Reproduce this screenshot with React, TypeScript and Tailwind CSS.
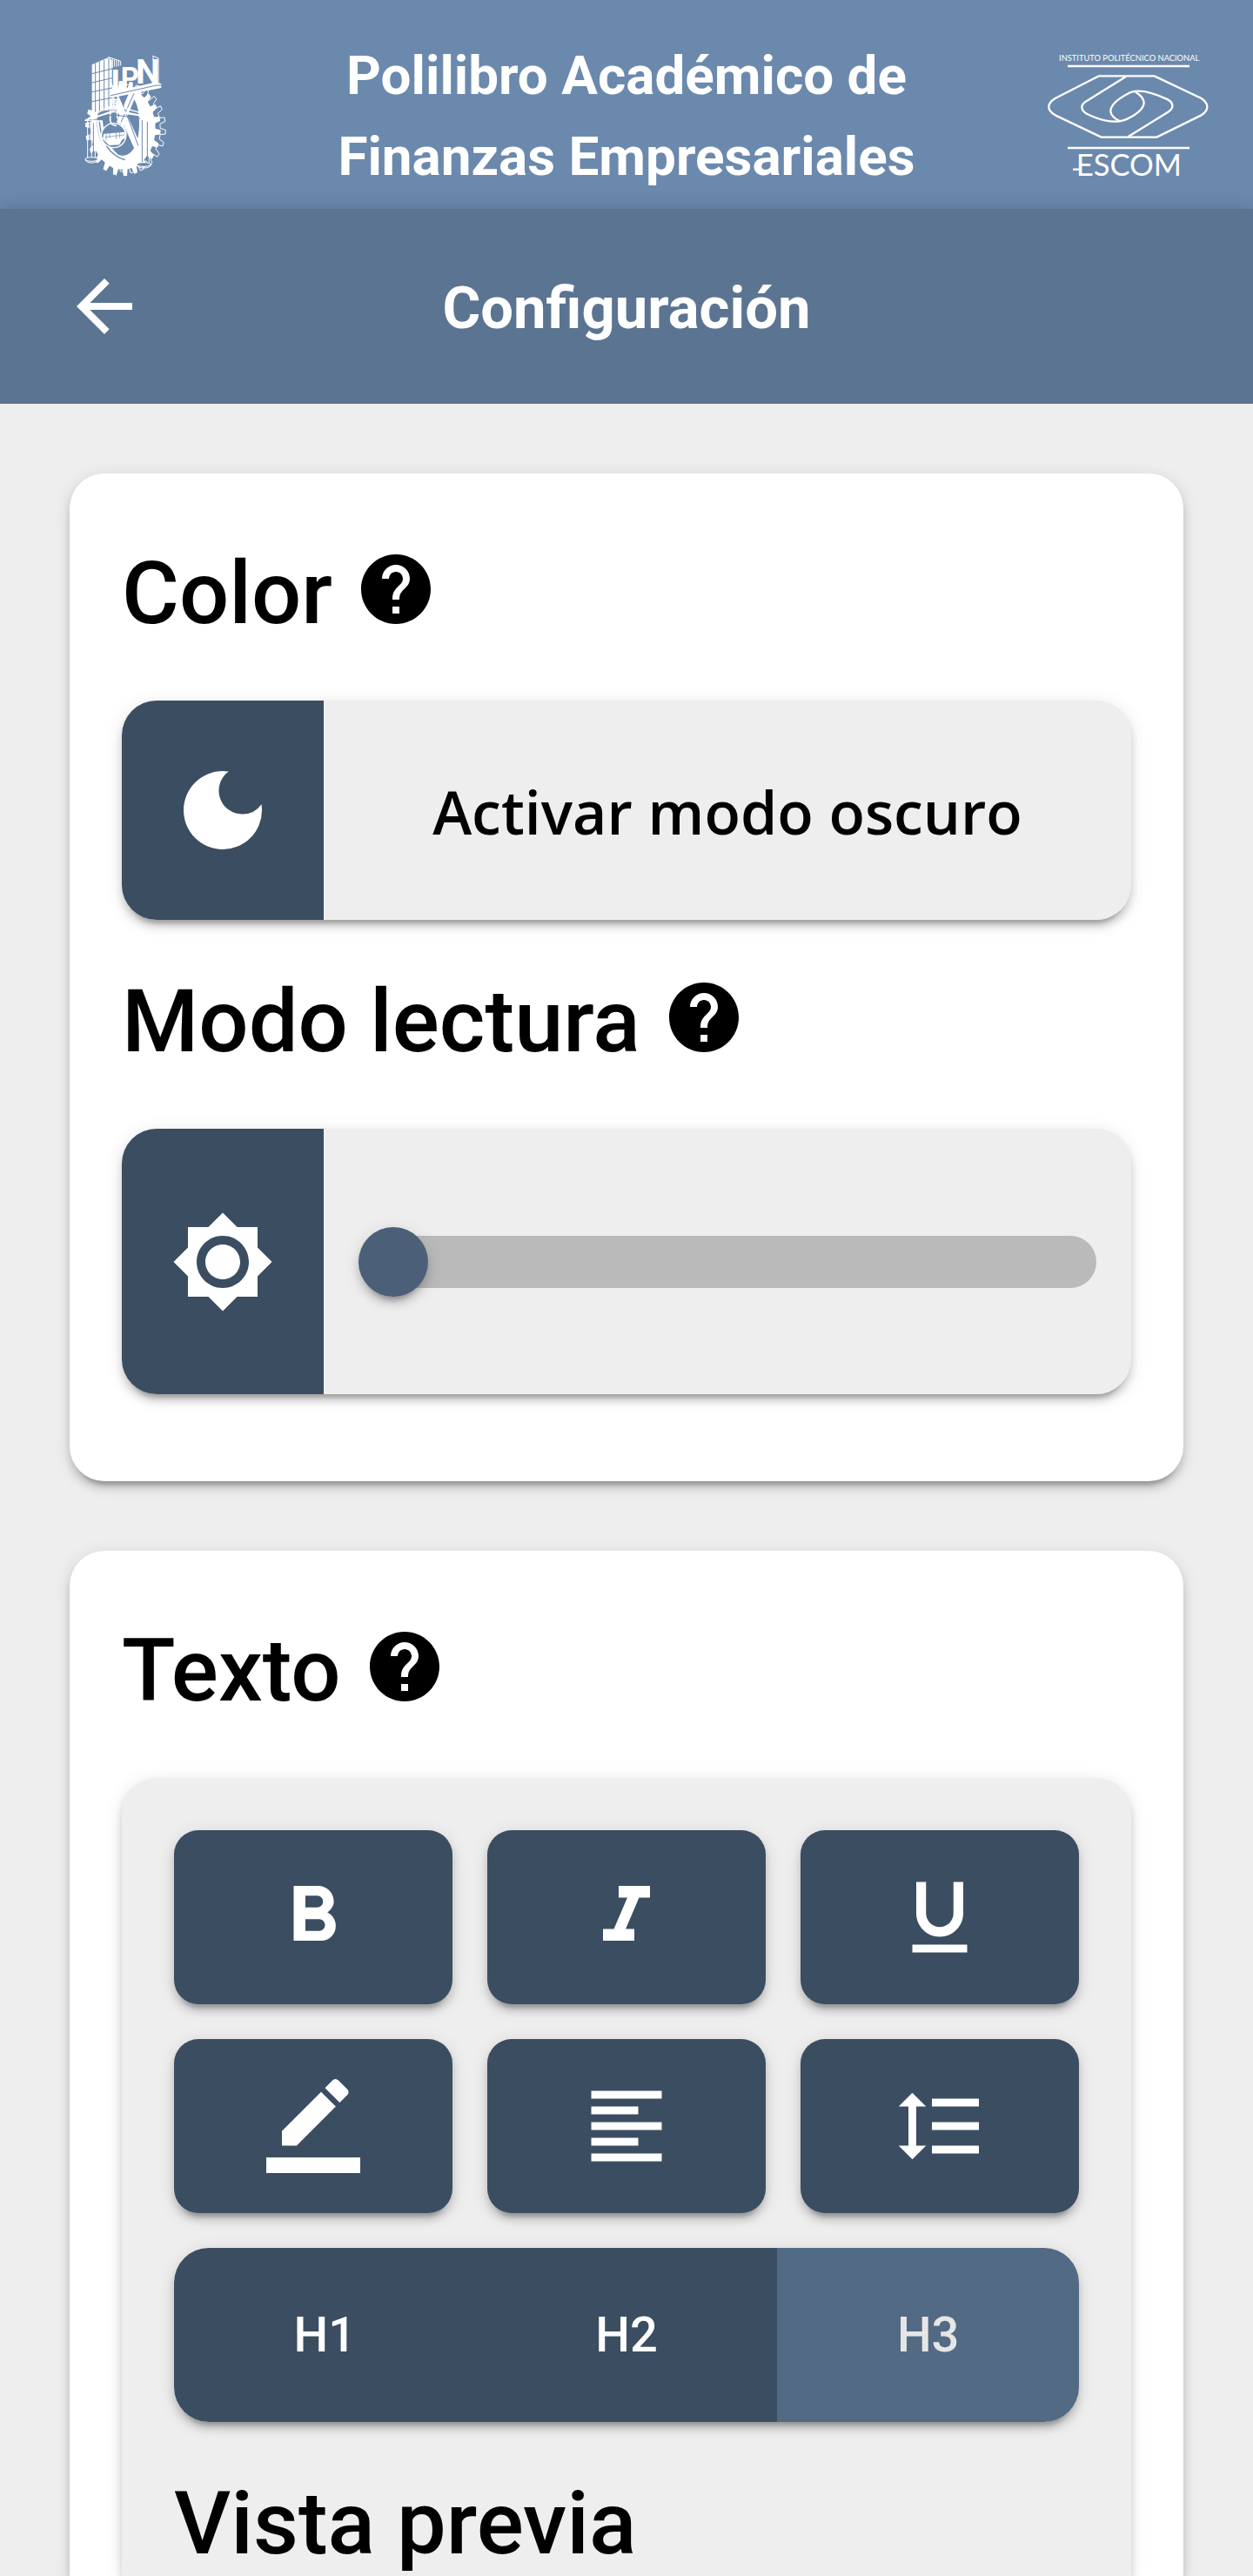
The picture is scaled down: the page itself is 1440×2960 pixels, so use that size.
import { useState } from 'react';
import type { ReactNode } from 'react';
import {
  MdArrowBack,
  MdBrightness7,
  MdDarkMode,
  MdFormatAlignLeft,
  MdFormatBold,
  MdFormatItalic,
  MdFormatLineSpacing,
  MdFormatUnderlined,
  MdHelp,
} from 'react-icons/md';

const ELEVATION =
  'shadow-[0_12px_4px_-8px_rgba(0,0,0,0.2),0_8px_8px_0_rgba(0,0,0,0.14),0_4px_20px_0_rgba(0,0,0,0.12)]';

function gearPoints(cx: number, cy: number, rx: number, ry: number, teeth: number) {
  const points: string[] = [];
  for (let i = 0; i < teeth; i++) {
    const step = (Math.PI * 2) / teeth;
    const corners: [number, number][] = [
      [0, 0.86],
      [0.12, 1],
      [0.44, 1],
      [0.56, 0.86],
    ];
    for (const [t, r] of corners) {
      const a = (i + t) * step;
      points.push(`${(cx + rx * r * Math.cos(a)).toFixed(1)},${(cy + ry * r * Math.sin(a)).toFixed(1)}`);
    }
  }
  return points.join(' ');
}

function IpnLogo() {
  const blue = '#6b89ad';
  return (
    <svg viewBox="48 36 288 420" className="h-[140px] w-[96px] overflow-visible" role="img" aria-label="IPN">
      <g strokeLinejoin="round" strokeLinecap="round">
        <polygon points={gearPoints(207, 290, 124, 152, 22)} fill={blue} stroke="#fff" strokeWidth="3" />
        <polygon points={gearPoints(184, 290, 130, 164, 22)} fill="#fff" />
        <path d="M150 176 C210 150 240 190 240 270 C240 340 220 380 184 384 C130 380 96 340 94 270 L98 232 L146 226 Z" fill={blue} />
        <path d="M166 172 L242 340 L226 366 L158 214 Z M236 158 L184 285 L162 268 L206 164 Z" fill="#fff" />
        <path d="M172 174 L236 348 M224 164 L172 280" stroke={blue} strokeWidth="3" fill="none" />
        <path d="M94 262 C96 340 130 396 206 402 C156 382 120 340 114 262 Z" fill="#fff" />
        <path d="M103 268 C108 330 134 380 190 398" stroke={blue} strokeWidth="4" fill="none" />

        <polygon points="77,70 135,44 146,54 146,224 77,234" fill="#fff" />
        <path
          d="M89 66V232 M103 60V230 M119 54V228 M135 48V226 M77 101L146 84 M77 132L146 116 M77 164L146 150 M77 197L146 184"
          stroke={blue}
          strokeWidth="3"
          fill="none"
        />
        <path d="M135 44 L176 58 V72 M148 52 V80 M155 53 V76 M162 56 V76 M169 58 V74" stroke="#fff" strokeWidth="3" fill="none" />

        <polygon points="138,166 172,158 300,130 316,136 316,150 146,184" fill="#fff" />
        <path d="M142 176 L300 141 L316 141" stroke={blue} strokeWidth="3" fill="none" />
        <path d="M288 40 L306 48 V130 M288 40 V52" stroke="#fff" strokeWidth="3" fill="none" />
        <text fontFamily="Roboto" fontWeight="700" fill="#fff">
          <tspan x="142" y="164" fontSize="112">I</tspan>
          <tspan x="176" y="150" fontSize="98">P</tspan>
          <tspan x="228" y="136" fontSize="118">N</tspan>
        </text>

        <circle cx="152" cy="314" r="42" fill={blue} stroke="#fff" strokeWidth="4" />
        <path d="M140 230 V262 C142 276 150 278 160 280 M164 230 V250 C170 270 196 284 194 312" stroke="#fff" strokeWidth="5" fill="none" />
        <path d="M118 308 L190 302 L194 322 L180 330 L172 346 L136 348 L114 326 Z" fill="#fff" />
        <path d="M126 308V330 M138 306V322 M160 304V326 M172 304V322 M122 320L188 312" stroke={blue} strokeWidth="2" fill="none" />
        <path d="M152 186 V214 M144 190H160 M142 197H162 M144 204H160 M142 212H163 M144 220H160" stroke="#fff" strokeWidth="5" fill="none" />
        <path d="M54 262 L130 216 H176 L272 244 M54 262 L152 232 L272 250 M70 256 L176 220 M130 220 L250 246" stroke="#fff" strokeWidth="4" fill="none" />
        <path d="M56 268 L150 242 L244 256" stroke={blue} strokeWidth="3" fill="none" />
        <path
          d="M62 262V392 M76 264V396 M88 262V396 M54 262H88 M244 252V410 M256 250V410 M274 262V412 M256 244L276 264"
          stroke="#fff"
          strokeWidth="3"
          fill="none"
        />
        <path d="M69 272V390 M82 272V390 M250 262V406 M268 268V406" stroke={blue} strokeWidth="3" fill="none" />
        <ellipse cx="76" cy="396" rx="22" ry="7" fill={blue} stroke="#fff" strokeWidth="3" />
        <path d="M54 398 C58 412 94 412 98 398" stroke="#fff" strokeWidth="3" fill="none" />
        <ellipse cx="256" cy="414" rx="25" ry="7" fill={blue} stroke="#fff" strokeWidth="3" />
        <path d="M231 416 C236 430 276 430 281 416" stroke="#fff" strokeWidth="3" fill="none" />
      </g>
    </svg>
  );
}

function EscomLogo() {
  return (
    <svg viewBox="36 36 564 420" className="h-[140px] w-[188px] overflow-visible" role="img" aria-label="ESCOM">
      <g fill="none" stroke="#fff" strokeWidth="7" strokeLinejoin="round">
        <path d="M111 75H531 M111 357H531" />
        <path d="M219 109H410L572 186Q592 200 592 215Q592 231 572 244L418 320H227L68 244Q46 231 46 215Q46 200 68 186Z" />
        <path d="M312 111L178 194Q160 204 160 216Q160 230 178 240C230 265 280 275 318 256C350 240 374 220 374 200Q372 180 345 164" />
        <path d="M320 318L456 234Q472 224 472 212Q472 198 456 190C410 168 354 148 318 170C284 188 258 208 259 232Q262 250 288 263" />
        <path d="M129 431H150" />
      </g>
      <g fill="#fff" fontFamily="Lato" textAnchor="middle">
        <text x="323" y="57" fontSize="28">
          INSTITUTO POLITÉCNICO NACIONAL
        </text>
        <text x="322" y="453" fontSize="104">
          ESCOM
        </text>
      </g>
    </svg>
  );
}

function BorderColorIcon() {
  return (
    <svg viewBox="0 0 24 24" fill="currentColor" className="size-[108px]" aria-hidden="true">
      <path d="M17.75 7L14 3.25l-10 10V17h3.75l10-10zm2.96-2.96c.39-.39.39-1.02 0-1.41L18.37.29c-.39-.39-1.02-.39-1.41 0L15 2.25 18.75 6l1.96-1.96z" />
      <path d="M0 20h24v4H0z" />
    </svg>
  );
}

function SectionTitle({ children }: { children: string }) {
  return (
    <h2 className="mb-[45px] text-[101px] leading-[156px] font-medium">
      {children}{' '}
      <button type="button" aria-label={`Ayuda: ${children}`} className="inline-block align-[-9px]">
        <MdHelp className="block size-24" />
      </button>
    </h2>
  );
}

function ToolButton({ label, children }: { label: string; children: ReactNode }) {
  return (
    <button
      type="button"
      aria-label={label}
      className={`flex h-[200px] items-center justify-center rounded-[28px] bg-[#3b4d61] text-white ${ELEVATION}`}
    >
      {children}
    </button>
  );
}

export default function App() {
  const [reading, setReading] = useState(0);
  const [heading, setHeading] = useState('H3');

  return (
    <div className="flex min-h-screen flex-col bg-[#eeeeee] font-['Roboto',sans-serif] text-black">
      <header className="grid h-60 grid-cols-[1fr_3fr_1fr] items-center justify-items-center bg-[#6b89ad] pt-[26px] text-white">
        <IpnLogo />
        <h1 className="text-center text-[62px] leading-[93px] font-bold">
          <span className="block">Polilibro Académico de</span>
          <span className="block">Finanzas Empresariales</span>
        </h1>
        <EscomLogo />
      </header>

      <nav className="grid h-56 grid-cols-[1fr_3fr_1fr] items-center bg-[#5b7491] text-white shadow-[0_0_20px_0_rgba(0,0,0,0.16)]">
        <button type="button" aria-label="Regresar" className="ml-[72px] justify-self-start">
          <MdArrowBack className="block size-24" />
        </button>
        <p className="pt-1 text-center text-[67px] leading-[80px] font-bold">Configuración</p>
      </nav>

      <main className="flex grow flex-col gap-20 bg-[#eeeeee] px-20 pt-20">
        <section className={`rounded-[40px] bg-white px-[60px] pt-[60px] pb-[100px] ${ELEVATION}`}>
          <SectionTitle>Color</SectionTitle>
          <button
            type="button"
            className={`mb-[39px] flex h-[252px] w-full overflow-hidden rounded-[40px] bg-[#eeeeee] ${ELEVATION}`}
          >
            <span className="flex h-full w-[232px] shrink-0 items-center justify-center bg-[#3b4d61] text-white">
              <MdDarkMode className="size-[120px]" />
            </span>
            <span className="grow self-center pt-1 text-center font-['Open_Sans',sans-serif] text-[68px] leading-[92px] font-semibold">
              Activar modo oscuro
            </span>
          </button>

          <SectionTitle>Modo lectura</SectionTitle>
          <div className={`flex h-[305px] overflow-hidden rounded-[40px] bg-[#eeeeee] ${ELEVATION}`}>
            <div className="flex w-[232px] shrink-0 items-center justify-center bg-[#3b4d61] text-white">
              <MdBrightness7 className="size-[120px]" />
            </div>
            <div className="flex grow items-center px-10">
              <input
                type="range"
                aria-label="Modo lectura"
                min={0}
                max={100}
                value={reading}
                onChange={(e) => setReading(Number(e.target.value))}
                className="h-20 w-full appearance-none bg-transparent [&::-webkit-slider-runnable-track]:h-[60px] [&::-webkit-slider-runnable-track]:rounded-[30px] [&::-webkit-slider-runnable-track]:bg-[#bababa] [&::-webkit-slider-thumb]:-mt-[10px] [&::-webkit-slider-thumb]:size-20 [&::-webkit-slider-thumb]:appearance-none [&::-webkit-slider-thumb]:rounded-full [&::-webkit-slider-thumb]:bg-[#4b5f79] [&::-webkit-slider-thumb]:shadow-[0_12px_4px_-8px_rgba(0,0,0,0.2),0_8px_8px_0_rgba(0,0,0,0.14),0_4px_20px_0_rgba(0,0,0,0.12)]"
              />
            </div>
          </div>
        </section>

        <section className={`flex grow flex-col rounded-t-[40px] bg-white px-[60px] pt-[60px] ${ELEVATION}`}>
          <SectionTitle>Texto</SectionTitle>
          <div className={`grow rounded-t-[40px] bg-[#eeeeee] px-[60px] pt-[60px] ${ELEVATION}`}>
            <div className="grid grid-cols-3 gap-10">
              <ToolButton label="Negrita">
                <MdFormatBold className="size-[108px]" />
              </ToolButton>
              <ToolButton label="Cursiva">
                <MdFormatItalic className="size-[108px]" />
              </ToolButton>
              <ToolButton label="Subrayado">
                <MdFormatUnderlined className="size-[108px]" />
              </ToolButton>
              <ToolButton label="Color de texto">
                <BorderColorIcon />
              </ToolButton>
              <ToolButton label="Alineación">
                <MdFormatAlignLeft className="size-[108px]" />
              </ToolButton>
              <ToolButton label="Interlineado">
                <MdFormatLineSpacing className="size-[108px]" />
              </ToolButton>
            </div>
            <div className={`mt-10 grid h-[200px] grid-cols-3 overflow-hidden rounded-[40px] ${ELEVATION}`}>
              {['H1', 'H2', 'H3'].map((h) => (
                <button
                  key={h}
                  type="button"
                  aria-pressed={heading === h}
                  onClick={() => setHeading(h)}
                  className={`text-[56px] font-medium ${
                    heading === h ? 'bg-[#536a85] text-[#e6e6e6]' : 'bg-[#3b4d61] text-white'
                  }`}
                >
                  {h}
                </button>
              ))}
            </div>
            <h3 className="mt-[65px] text-[101px] leading-[104px] font-medium">Vista previa</h3>
          </div>
        </section>
      </main>
    </div>
  );
}
